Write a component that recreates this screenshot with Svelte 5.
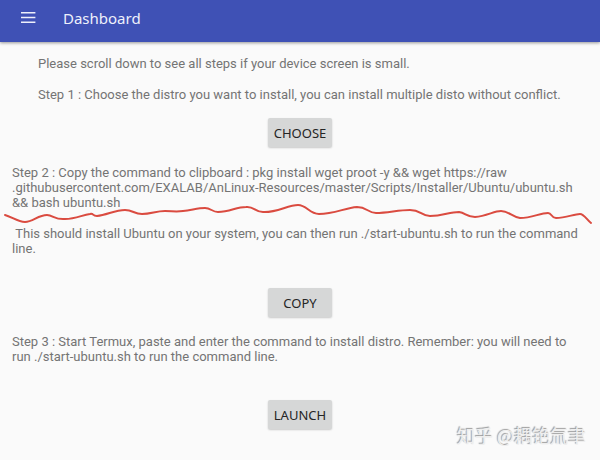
<script lang="ts">
    let menuOpen = $state(false);

    function toggleMenu() {
        menuOpen = !menuOpen;
    }
</script>

<header>
    <button class="menu" aria-label="Menu" aria-expanded={menuOpen} onclick={toggleMenu}>
        <svg viewBox="0 0 16 12" width="16" height="12" aria-hidden="true">
            <path d="M1 0.8H15.4M1 5.5H15.4M1 10.2H15.4" stroke="currentColor" stroke-width="1.6" />
        </svg>
    </button>
    <h1>Dashboard</h1>
</header>

<main>
    <p class="intro">Please scroll down to see all steps if your device screen is small.</p>
    <p class="intro">Step 1 : Choose the distro you want to install, you can install multiple disto without conflict.</p>
    <button class="action">CHOOSE</button>

    <div class="command">
        <p>
            Step 2 : Copy the command to clipboard : pkg install wget proot -y &amp;&amp; wget https://raw<br />
            .githubusercontent.com/EXALAB/AnLinux-Resources/master/Scripts/Installer/Ubuntu/ubuntu.sh<br />
            &amp;&amp; bash ubuntu.sh
        </p>
        <svg class="underline" viewBox="0 0 600 30" preserveAspectRatio="none" aria-hidden="true">
            <path
                d="M5 15C12 17 18 22 25 22C33 22 38 15 47 15C53 15 55 20 65 19C76 19 82 15 90 14C94 13 92 16 97 16C107 15 115 10 125 10C133 10 134 14 142 14C151 14 156 11 165 11C172 11 176 12 183 11C192 10 198 8 205 8C211 8 212 12 218 12C230 12 236 7 246 7C254 6 255 12 263 12C276 13 288 5 298 5C307 5 309 14 319 14C334 14 345 8 357 7C367 7 368 13 376 13C388 13 398 10 410 10C421 10 421 16 430 16C443 16 449 12 459 12C466 13 466 17 475 17C487 16 494 11 501 11C509 11 512 17 520 18C532 18 540 13 548 13C552 13 551 18 556 18C566 18 574 14 580 14C584 14 587 20 591 23"
            />
        </svg>
    </div>
    <p class="result">
        &nbsp;This should install Ubuntu on your system, you can then run ./start-ubuntu.sh to run the command<br />
        line.
    </p>
    <button class="action">COPY</button>

    <p class="launch">
        Step 3 : Start Termux, paste and enter the command to install distro. Remember: you will need to<br />
        run ./start-ubuntu.sh to run the command line.
    </p>
    <button class="action">LAUNCH</button>
</main>

<div class="watermark">知乎 @耦铯氚聿</div>

<style>
    :global(body) {
        background: #fafafa;
        font-family: "Noto Sans", "Noto Sans CJK SC", sans-serif;
    }

    header {
        display: flex;
        align-items: center;
        gap: 27px;
        padding: 0 20px 6px;
        height: 36px;
        background: #3f51b5;
        color: #eef0fb;
        box-shadow: 0 1px 3px rgba(0, 0, 0, 0.4);
    }

    .menu {
        display: flex;
        padding: 0;
        border: none;
        background: none;
        color: inherit;
        cursor: pointer;
    }

    h1 {
        margin: 0;
        font-size: 15px;
        font-weight: 400;
        line-height: 20px;
    }

    main {
        display: flex;
        flex-direction: column;
        align-items: center;
        padding: 14px 12px 28px;
        color: #747474;
        font-size: 13px;
        line-height: 15px;
    }

    p {
        align-self: stretch;
        margin: 0;
        font-family: Roboto, "Noto Sans", sans-serif;
    }

    .intro {
        margin: 0 26px 16px;
    }

    .action {
        min-width: 64px;
        height: 29px;
        padding: 0 6px;
        border: none;
        border-radius: 2px;
        background: #d6d7d7;
        box-shadow: 0 1px 2px rgba(0, 0, 0, 0.2);
        color: #252525;
        font-family: inherit;
        font-size: 13px;
        cursor: pointer;
    }

    .command {
        position: relative;
        align-self: stretch;
        margin-top: 18px;
    }

    .underline {
        position: absolute;
        top: 35px;
        left: -12px;
        width: calc(100% + 24px);
        height: 30px;
    }

    .underline path {
        fill: none;
        stroke: #da4b40;
        stroke-width: 2;
        stroke-linecap: round;
        stroke-linejoin: round;
    }

    .result {
        margin: 16px 0 32px;
    }

    .launch {
        margin: 17px 0 36px;
    }

    .watermark {
        position: absolute;
        right: 14px;
        bottom: 13px;
        color: #eee;
        font-family: "Noto Sans CJK SC", sans-serif;
        font-size: 18px;
        line-height: 24px;
        text-shadow: -1px -1px 1px #999;
    }
</style>
